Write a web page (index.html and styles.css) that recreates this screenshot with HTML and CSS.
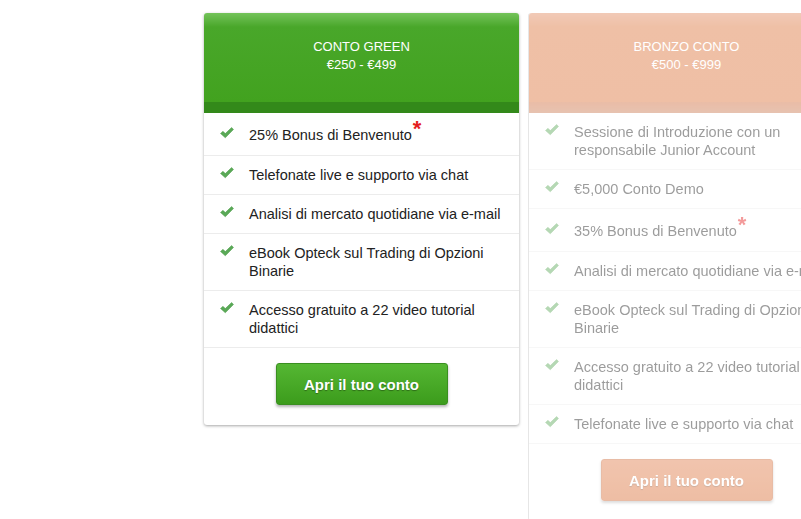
FILE: index.html
```html
<!DOCTYPE html>
<html lang="it">
<head>
    <meta charset="UTF-8">
    <meta name="viewport" content="width=device-width, initial-scale=1.0">
    <title>Conti</title>
    <link rel="stylesheet" href="styles.css">
</head>
<body>
    <div class="plans">
        <div class="plan plan-green">
            <div class="plan-head">
                <div class="plan-name">CONTO GREEN</div>
                <div class="plan-price">€250 - €499</div>
            </div>
            <div class="plan-band"></div>
            <ul class="features">
                <li class="has-star"><span class="check"><svg viewBox="0 0 14 12" width="14" height="12"><path d="M0.5 6.5 L3 4.3 L5.3 6.6 L11.6 0.5 L13.5 2.4 L5.3 10.8 Z" fill="#5aa957" stroke="#4a9a47" stroke-width="0.5"/></svg></span><span>25% Bonus di Benvenuto<sup class="star">*</sup></span></li>
                <li><span class="check"><svg viewBox="0 0 14 12" width="14" height="12"><path d="M0.5 6.5 L3 4.3 L5.3 6.6 L11.6 0.5 L13.5 2.4 L5.3 10.8 Z" fill="#5aa957" stroke="#4a9a47" stroke-width="0.5"/></svg></span><span>Telefonate live e supporto via chat</span></li>
                <li><span class="check"><svg viewBox="0 0 14 12" width="14" height="12"><path d="M0.5 6.5 L3 4.3 L5.3 6.6 L11.6 0.5 L13.5 2.4 L5.3 10.8 Z" fill="#5aa957" stroke="#4a9a47" stroke-width="0.5"/></svg></span><span>Analisi di mercato quotidiane via e-mail</span></li>
                <li><span class="check"><svg viewBox="0 0 14 12" width="14" height="12"><path d="M0.5 6.5 L3 4.3 L5.3 6.6 L11.6 0.5 L13.5 2.4 L5.3 10.8 Z" fill="#5aa957" stroke="#4a9a47" stroke-width="0.5"/></svg></span><span>eBook Opteck sul Trading di Opzioni Binarie</span></li>
                <li><span class="check"><svg viewBox="0 0 14 12" width="14" height="12"><path d="M0.5 6.5 L3 4.3 L5.3 6.6 L11.6 0.5 L13.5 2.4 L5.3 10.8 Z" fill="#5aa957" stroke="#4a9a47" stroke-width="0.5"/></svg></span><span>Accesso gratuito a 22 video tutorial didattici</span></li>
            </ul>
            <div class="plan-foot">
                <button type="button" class="open-btn">Apri il tuo conto</button>
            </div>
        </div>

        <div class="plan plan-bronze">
            <div class="plan-head">
                <div class="plan-name">BRONZO CONTO</div>
                <div class="plan-price">€500 - €999</div>
            </div>
            <div class="plan-band"></div>
            <ul class="features">
                <li><span class="check"><svg viewBox="0 0 14 12" width="14" height="12"><path d="M0.5 6.5 L3 4.3 L5.3 6.6 L11.6 0.5 L13.5 2.4 L5.3 10.8 Z" fill="#5aa957" stroke="#4a9a47" stroke-width="0.5"/></svg></span><span>Sessione di Introduzione con un responsabile Junior Account</span></li>
                <li><span class="check"><svg viewBox="0 0 14 12" width="14" height="12"><path d="M0.5 6.5 L3 4.3 L5.3 6.6 L11.6 0.5 L13.5 2.4 L5.3 10.8 Z" fill="#5aa957" stroke="#4a9a47" stroke-width="0.5"/></svg></span><span>€5,000 Conto Demo</span></li>
                <li class="has-star"><span class="check"><svg viewBox="0 0 14 12" width="14" height="12"><path d="M0.5 6.5 L3 4.3 L5.3 6.6 L11.6 0.5 L13.5 2.4 L5.3 10.8 Z" fill="#5aa957" stroke="#4a9a47" stroke-width="0.5"/></svg></span><span>35% Bonus di Benvenuto<sup class="star">*</sup></span></li>
                <li><span class="check"><svg viewBox="0 0 14 12" width="14" height="12"><path d="M0.5 6.5 L3 4.3 L5.3 6.6 L11.6 0.5 L13.5 2.4 L5.3 10.8 Z" fill="#5aa957" stroke="#4a9a47" stroke-width="0.5"/></svg></span><span>Analisi di mercato quotidiane via e-mail</span></li>
                <li><span class="check"><svg viewBox="0 0 14 12" width="14" height="12"><path d="M0.5 6.5 L3 4.3 L5.3 6.6 L11.6 0.5 L13.5 2.4 L5.3 10.8 Z" fill="#5aa957" stroke="#4a9a47" stroke-width="0.5"/></svg></span><span>eBook Opteck sul Trading di Opzioni Binarie</span></li>
                <li><span class="check"><svg viewBox="0 0 14 12" width="14" height="12"><path d="M0.5 6.5 L3 4.3 L5.3 6.6 L11.6 0.5 L13.5 2.4 L5.3 10.8 Z" fill="#5aa957" stroke="#4a9a47" stroke-width="0.5"/></svg></span><span>Accesso gratuito a 22 video tutorial didattici</span></li>
                <li><span class="check"><svg viewBox="0 0 14 12" width="14" height="12"><path d="M0.5 6.5 L3 4.3 L5.3 6.6 L11.6 0.5 L13.5 2.4 L5.3 10.8 Z" fill="#5aa957" stroke="#4a9a47" stroke-width="0.5"/></svg></span><span>Telefonate live e supporto via chat</span></li>
            </ul>
            <div class="plan-foot">
                <button type="button" class="open-btn">Apri il tuo conto</button>
            </div>
        </div>
    </div>
</body>
</html>
```

FILE: styles.css
```css
body {
    font-family: Arial, "Liberation Sans", sans-serif;
    margin: 0;
    padding: 0;
    background: #fff;
    overflow: hidden;
}
.plans {
    display: flex;
    align-items: flex-start;
    gap: 10px;
    padding: 13px 0 0 204px;
    width: 1000px;
}
.plan {
    width: 315px;
    flex: none;
    background: #fff;
    border-radius: 3px;
    box-shadow: 0 1px 3px rgba(0, 0, 0, 0.35);
}
.plan-head {
    height: 89px;
    box-sizing: border-box;
    padding-top: 25px;
    text-align: center;
    color: #fff;
    font-size: 13px;
    line-height: 18px;
    border-radius: 3px 3px 0 0;
}
.plan-band {
    height: 11px;
}
.plan-green .plan-head {
    background: linear-gradient(#74c35a 0, #49a72a 14px, #42a21f 100%);
}
.plan-green .plan-band {
    background: #33891a;
}
.features {
    list-style: none;
    margin: 0;
    padding: 0;
}
.features li {
    display: flex;
    align-items: flex-start;
    padding: 10px 8px 10px 16px;
    border-bottom: 1px solid #ececec;
    font-size: 14.5px;
    line-height: 18px;
    color: #222;
}
.features li.has-star {
    padding-top: 13px;
    padding-bottom: 11px;
}
.check {
    width: 14px;
    flex: none;
    margin: 1px 15px 0 0;
}
.check svg {
    display: block;
}
.star {
    color: #e41e1e;
    font-size: 22px;
    font-weight: bold;
    line-height: 0;
    position: relative;
    top: 2px;
    margin-left: 1px;
    vertical-align: super;
}
.plan-foot {
    padding: 15px 0 20px;
    text-align: center;
}
.open-btn {
    width: 172px;
    height: 42px;
    border: 1px solid #3a8f20;
    border-radius: 3px;
    background: linear-gradient(#55b733, #3c9c1c);
    color: #fff;
    font-family: Arial, "Liberation Sans", sans-serif;
    font-size: 15px;
    font-weight: bold;
    text-shadow: 0 1px 1px rgba(0, 0, 0, 0.35);
    box-shadow: 0 2px 3px rgba(0, 0, 0, 0.3);
    cursor: pointer;
}
.plan-bronze {
    opacity: 0.45;
    box-shadow: -1px 0 0 #c8c8c8;
}
.plan-bronze .plan-head {
    background: linear-gradient(#e0885e 0, #db7238 14px, #db7137 100%);
}
.plan-bronze .plan-band {
    background: linear-gradient(#d06a3a, #c9784f);
}
.plan-bronze .open-btn {
    background: linear-gradient(#e07c4a, #d96d34);
    border-color: #cc6a38;
}
```
